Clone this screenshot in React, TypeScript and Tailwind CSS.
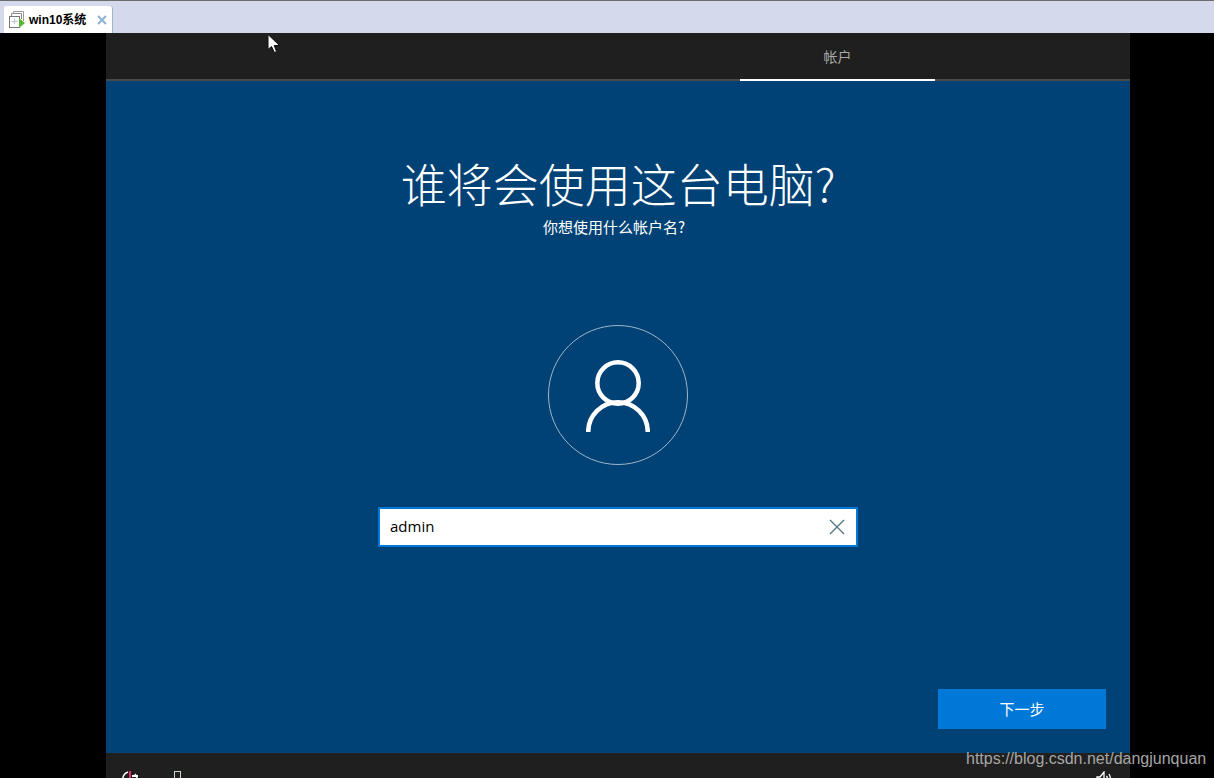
const cjk = "font-['Noto_Sans_CJK_SC','Noto_Sans',sans-serif]";

function VmIcon() {
  return (
    <svg width="18" height="18" viewBox="0 0 18 18" fill="none" className="shrink-0">
      <path d="M4.5 3 V0.5 H14.5 V10" stroke="#9a9a9a" />
      <path d="M2.5 5 V2.5 H12.5 V8" stroke="#8a8a8a" />
      <rect x="0.5" y="5.5" width="10" height="11" fill="#fff" stroke="#777" />
      <path d="M5.5 7.5 V13 M2.5 10.5 H8.5" stroke="#b9c4cc" />
      <path d="M10 7 L16 12 L10 17 Z" fill="#5cb531" />
    </svg>
  );
}

function Cursor() {
  return (
    <svg width="14" height="20" viewBox="0 0 14 20" className="absolute left-[267px] top-[34px]">
      <path d="M1 0.5 V15.5 L4.5 12.5 L7.5 18.5 L9.5 17.5 L7.2 11.5 H12.5 Z" fill="#fff" stroke="#111" strokeWidth="1" />
    </svg>
  );
}

export default function App() {
  return (
    <div className="relative h-[778px] w-[1214px] overflow-hidden bg-black">
      {/* vm tab strip */}
      <div className="h-px bg-[#6d6d6d]" />
      <div className="flex h-[32px] items-end bg-[#d4d9ec] pl-[4px]">
        <div className="flex h-[27px] w-[109px] items-center rounded-tr-[3px] rounded-tl-[2px] border-r border-[#a4b2cc] bg-white pl-[5px]">
          <VmIcon />
          <span className="ml-[2px] font-['Liberation_Sans','Noto_Sans_CJK_SC',sans-serif] text-[12px] leading-none font-bold text-black">win10系统</span>
          <svg width="10" height="10" viewBox="0 0 10 10" className="ml-[11px]">
            <path d="M1 1 L9 9 M9 1 L1 9" stroke="#90b2cf" strokeWidth="2" />
          </svg>
        </div>
      </div>

      <div className="ml-[106px] flex h-[745px] w-[1024px] flex-col">
        {/* oobe header */}
        <div className="flex h-[48px] shrink-0 justify-end border-b-2 border-[#4a4a4a] bg-[#1f1f1f] pr-[195px]">
          <div className={`-mb-[2px] flex w-[195px] items-center justify-center border-b-2 border-white text-[14px] text-[#a8a8a8] ${cjk}`}>
            帐户
          </div>
        </div>

        {/* page */}
        <div className="flex flex-1 flex-col items-center bg-[#004275] pt-[68px]">
          <h1 className={`text-[46px] leading-[66px] font-light text-white ${cjk}`}>谁将会使用这台电脑?</h1>
          <p className={`mt-[2px] mr-[8px] text-[15px] leading-[20px] text-white ${cjk}`}>你想使用什么帐户名?</p>

          <div className="mt-[88px] flex h-[140px] w-[140px] items-center justify-center rounded-full border border-[#9fb6ca]">
            <svg width="64" height="72" viewBox="0 0 64 72" fill="none" stroke="#fff" strokeWidth="4.5" className="mt-[2px]">
              <circle cx="32" cy="23" r="20.7" />
              <path d="M2.2 72 A29.8 29.8 0 0 1 61.8 72" />
            </svg>
          </div>

          <div className="mt-[42px] flex h-[40px] w-[480px] items-center justify-between border-2 border-[#0078d7] bg-white pr-[11px] pl-[10px]">
            <span className="-mt-[2px] font-['Open_Sans',sans-serif] text-[15px] text-black">admin</span>
            <svg width="16" height="16" viewBox="0 0 16 16" fill="none">
              <path d="M1 1 L15 15 M15 1 L1 15" stroke="#4f7485" strokeWidth="1.3" />
            </svg>
          </div>

          <div className="mt-auto mb-[24px] flex w-full justify-end pr-[24px]">
            <button className={`h-[40px] w-[168px] bg-[#0078d7] text-[15px] text-white ${cjk}`}>下一步</button>
          </div>
        </div>

        {/* bottom bar, cut off by the window */}
        <div className="flex h-[25px] shrink-0 items-start justify-between bg-[#1f1f1f] pt-[18px] pr-[18px] pl-[16px]">
          <div className="flex items-start gap-[34px]">
            <svg width="18" height="18" viewBox="0 0 18 18" fill="none">
              <path d="M6 1 A7 7 0 1 0 13 3" stroke="#fff" strokeWidth="1.5" />
              <path d="M8 0 V7" stroke="#e0306a" strokeWidth="2" />
              <path d="M10 5 H16" stroke="#fff" strokeWidth="2" />
            </svg>
            <div className="h-[16px] w-[7px] border border-[#c8d8c8]" />
          </div>
          <svg width="16" height="18" viewBox="0 0 16 18" fill="none" stroke="#fff" strokeWidth="1.3">
            <path d="M1 6 H4 L8 1 V17 L4 12 H1 Z" />
            <path d="M10.5 5 C12 7 12 11 10.5 13 M13 3 C15 6 15 12 13 15" />
          </svg>
        </div>
      </div>

      <Cursor />

      {/* blog watermark */}
      <span className="absolute top-[749px] left-[966px] font-['Liberation_Sans',sans-serif] text-[16px] leading-[20px] text-[#a6a6a6]">
        https://blog.csdn.net/dangjunquan
      </span>
    </div>
  );
}
